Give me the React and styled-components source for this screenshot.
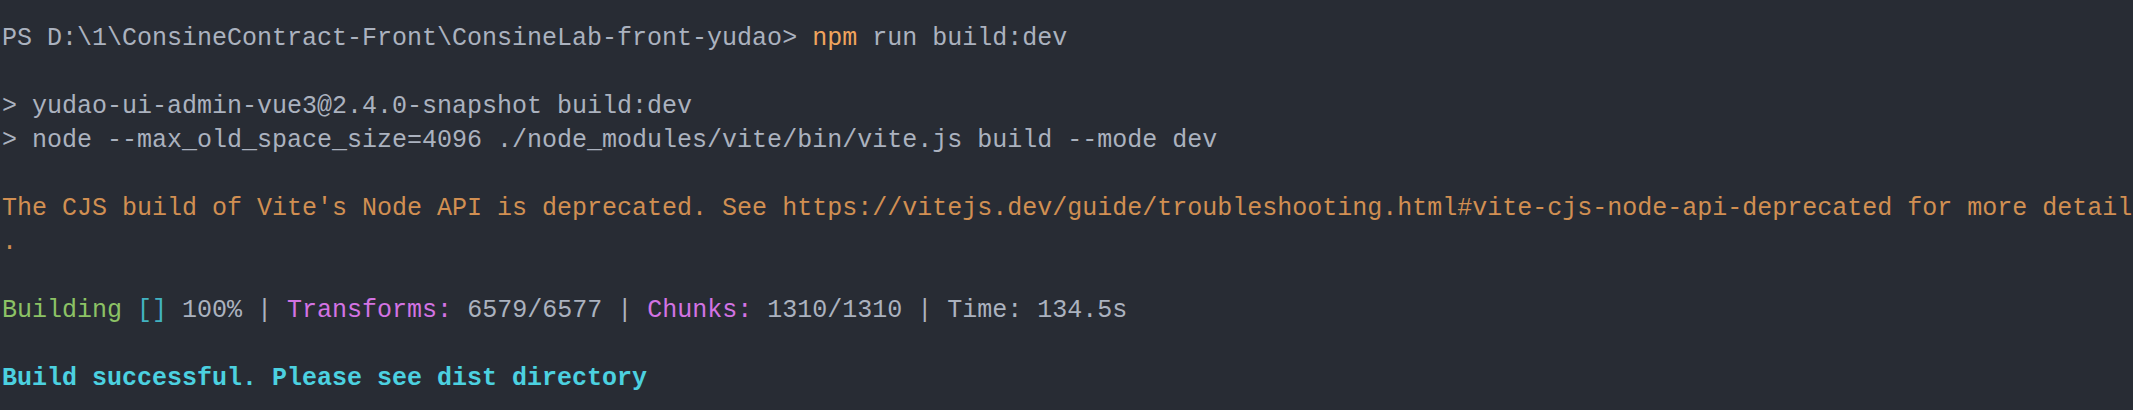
import React from 'react'
import styled, { createGlobalStyle } from 'styled-components'

const GlobalStyle = createGlobalStyle`
    html, body {
        margin: 0;
        padding: 0;
        background-color: #282c34;
    }
`

const colors = {
    text: '#abb2bf',
    yellow: '#d18f52',
    brightYellow: '#f0a45d',
    green: '#8cc265',
    cyan: '#42b3c2',
    brightCyan: '#4cd1e0',
    magenta: '#d373e3',
}

const Terminal = styled.div`
    width: 2133px;
    height: 410px;
    box-sizing: border-box;
    padding: 22px 0 0 2px;
    background-color: #282c34;
    color: ${colors.text};
    font-family: "Liberation Mono", "DejaVu Sans Mono", monospace;
    font-size: 25px;
    overflow: hidden;
`

const Line = styled.div`
    height: 34px;
    line-height: 34px;
    white-space: pre;
`

const Tone = styled.span`
    color: ${({ $tone }) => colors[$tone] || colors.text};
    font-weight: ${({ $bold }) => ($bold ? 700 : 400)};
`

export default function App() {
    return (
        <>
            <GlobalStyle />
            <Terminal>
                <Line>
                    PS D:\1\ConsineContract-Front\ConsineLab-front-yudao&gt; <Tone $tone="brightYellow">npm</Tone> run build:dev
                </Line>
                <Line />
                <Line>&gt; yudao-ui-admin-vue3@2.4.0-snapshot build:dev</Line>
                <Line>&gt; node --max_old_space_size=4096 ./node_modules/vite/bin/vite.js build --mode dev</Line>
                <Line />
                <Line>
                    <Tone $tone="yellow">The CJS build of Vite's Node API is deprecated. See https://vitejs.dev/guide/troubleshooting.html#vite-cjs-node-api-deprecated for more detail</Tone>
                </Line>
                <Line>
                    <Tone $tone="yellow">.</Tone>
                </Line>
                <Line />
                <Line>
                    <Tone $tone="green">Building</Tone> <Tone $tone="cyan">[]</Tone> 100% | <Tone $tone="magenta">Transforms:</Tone> 6579/6577 | <Tone $tone="magenta">Chunks:</Tone> 1310/1310 | Time: 134.5s
                </Line>
                <Line />
                <Line>
                    <Tone $tone="brightCyan" $bold>Build successful. Please see dist directory</Tone>
                </Line>
            </Terminal>
        </>
    )
}
